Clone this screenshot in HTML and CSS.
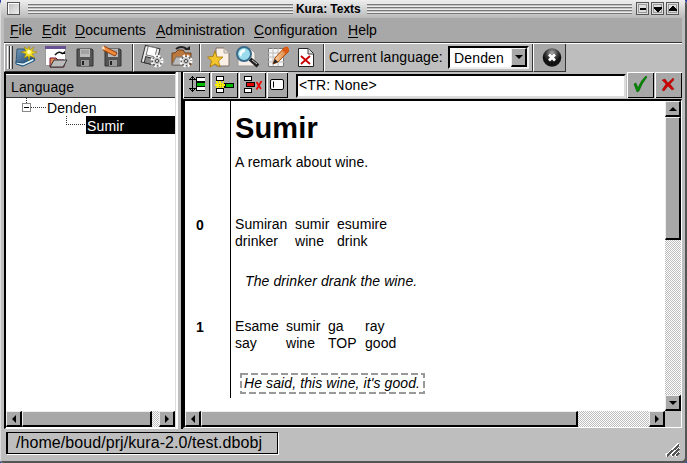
FILE: index.html
```
<!DOCTYPE html>
<html lang="en"><head><meta charset="utf-8"><title>Kura: Texts</title><link rel="stylesheet" href="styles.css"></head>
<body><div class="window">
<header class="title"><i class="close"></i><i class="stripes s1"></i><h1>Kura: Texts</h1><i class="stripes s2"></i>
<svg class="controls" width="45" height="14" shape-rendering="crispEdges"><g fill="#ddd" stroke="#555"><path d="M.5 .5h12v12H.5zM15.500 .5h12v12h-12zM30.500 .5h12v12h-12z"/></g><g fill="none" stroke="#999"><path d="M2.500 2.500h8v8h-8zM17.500 2.500h8v8h-8zM32.500 2.500h8v8h-8z"/></g><path d="M4 6h6v2H4zM18 5h8v2h-1v1h-1v1h-1v1h-2V9h-1V8h-1V7h-1zM33 9V7h1V6h1V5h1V4h2v1h1v1h1v1h1v2z"/></svg></header>
<nav class="menu"><span class="m1"><u>F</u>ile</span><span class="m2"><u>E</u>dit</span><span class="m3"><u>D</u>ocuments</span><span class="m4"><u>A</u>dministration</span><span class="m5"><u>C</u>onfiguration</span><span class="m6"><u>H</u>elp</span></nav>
<div class="toolbar">
<section class="t1"><i class="grip"></i><i class="grip"></i>
<svg width="118" height="26"><defs><linearGradient id="bl" x2="1" y2="1"><stop stop-color="#7297b8"/><stop offset="1" stop-color="#123d65"/></linearGradient><linearGradient id="or" x2="1"><stop stop-color="#ffe0b4"/><stop offset="1" stop-color="#d46b20"/></linearGradient></defs>
<path d="M4 4l10 0 8 11-13 6-6-3z" fill="url(#bl)" stroke="#355875"/><path d="M3 17l7 1 11-5v3l-11 5-7-2z" fill="#dceaf2" stroke="#164f78"/><path d="M16 1l1 4 4-3-2 4 5 1-5 2 3 4-5-2-1 5-1-5-4 2 2-4-5-2 5-1-2-4 4 2z" fill="#f0dc24" stroke="#9a7b00" stroke-width=".5"/><circle cx="16" cy="7" r="2" fill="#fffbb0"/>
<path d="M32.500 2.500h20v18h-20z" fill="#fff" stroke="#999"/><path d="M32 1h21v3H32z" fill="#685092"/><path d="M42 10q4-5 8-1" fill="none" stroke="#111" stroke-width="1.500"/><path d="M48 9h4V6z"/><path d="M37 22v-9h6l2 2h6v7z" fill="#e88d55" stroke="#713"/><path d="M37 22l4-7h13l-4 7z" fill="#bbb" stroke="#333"/>
<g id="floppy" transform="translate(63 3)"><path d="M1 1h15l1 1v16H1z" fill="#555" stroke="#333"/><path d="M4 1h10v8H4z" fill="#bbb"/><path d="M5 3h8M5 5h8" stroke="#888"/><path d="M5 12h8v6H5z" fill="#999"/><path d="M6 13h2v4H6z" fill="#222"/></g><use href="#floppy" x="28"/><path d="M91 1l13 7-2 3-12-6z" fill="#f28b39" stroke="#953d0d"/><path d="M89 2l2-1 1 4-3-1z" fill="#ffe0b4"/></svg></section>
<section class="t2"><svg width="60" height="26"><g transform="translate(8 1) rotate(14 9 10)"><path d="M1 1h15v17H1z" fill="#eee" stroke="#333"/><path d="M4 1h9v9H4z" fill="#fff" stroke="#777"/><path d="M4 12h8v6H4z" fill="#888" stroke="#333"/></g><path d="M38 20V8h3l3-3h5l2 3h6v12z" fill="#bd783e" stroke="#6f401b"/><path d="M42 4q5-4 11 0" fill="none" stroke="#222" stroke-width="2"/><path d="M50 5h6V1z" fill="#222"/><path d="M38 20l4-8h16l-4 8z" fill="#bbb" stroke="#777"/><g id="gear" fill="none" stroke="#fff"><circle cx="23" cy="16" r="5" fill="#555" stroke-width="3" stroke-dasharray="2 2"/><circle cx="23" cy="16" r="3.500" fill="#aaa" stroke="#eee"/><circle cx="23" cy="16" r="1.500" fill="#fff" stroke="#444"/></g><use href="#gear" x="29"/></svg></section>
<section class="t3"><svg width="118" height="28"><path d="M17 4h8l5 5v13H17z" transform="translate(-2 0)" fill="#fbf0e6" stroke="#827268"/><path d="M23 4v5h5" fill="#e4d5c8" stroke="#aaa"/><path d="M14 7l2 6h6l-4.500 4 1.500 6-5-3-5 3 1.500-6-4-4 5.500-.5z" fill="#f2c52c" stroke="#a87500" stroke-width=".8"/><path d="M37 5h13l4 4v13H37z" fill="#f6eee7" stroke="#999"/><path d="M49 15l8 7" stroke="#222" stroke-width="4"/><path d="M51 16l5 4" stroke="#ccc"/><circle cx="43" cy="10" r="7" fill="#9bdcec" stroke="#3a6a8a" stroke-width="2"/><path d="M38 10q1-5 6-5v3q-3 0-4 5z" fill="#f3ffff"/><path d="M67.500 4.500h15v18h-15z" fill="#f5f5f5" stroke="#777"/><path d="M67 9h16M67 13h16M67 18h16M72 4v18M77 4v18" stroke="#bbb"/><path d="M84 3l4 4-11 11-5 2 2-6z" fill="url(#or)" stroke="#a94b0c"/><path d="M84 3q4-2 4 4l-3 3-4-4z" fill="#dc5a13"/><path d="M72 20l5-2-3-3z" fill="#222"/><path d="M97.500 4.500h10l5 5v13h-15z" fill="#fff" stroke="#222"/><path d="M107 4v6h5" fill="#ddd" stroke="#444"/><path d="M100 12l9 8M109 12l-9 8" stroke="#c00" stroke-width="1.800"/></svg></section>
<section class="t4"><span>Current language:</span><div class="combo"><b>Denden</b><i class="sb down"></i></div></section>
<section class="t5"><svg width="30" height="27"><defs><radialGradient id="ball" cy=".25"><stop stop-color="#aaa"/><stop offset=".7" stop-color="#333"/><stop offset="1" stop-color="#111"/></radialGradient></defs><circle cx="18" cy="13.500" r="9.300" fill="url(#ball)"/><path d="M15 10.500l6 6M21 10.500l-6 6" stroke="#fff" stroke-width="2.800"/></svg></section></div>
<main><aside><div class="inner"><div class="colhead">Language</div><div class="tree"><svg width="41" height="36" shape-rendering="crispEdges"><path d="M20.500 0v5M25 9.500h15" stroke="#333" stroke-dasharray="1 1"/><path d="M16.500 5.500h8v8h-8z" fill="#fff" stroke="#888"/><path d="M18 9.500h5" stroke="#000"/></svg><span class="root">Denden</span><div class="childrow"><svg width="20" height="18" shape-rendering="crispEdges"><path d="M.5 0v8.500H20" fill="none" stroke="#333" stroke-dasharray="1 1"/></svg><span>Sumir</span></div></div>
<div class="hscroll"><i class="sb left"></i><i class="thumb"></i><i class="track"></i><i class="sb right"></i></div></div></aside><i class="splitter"></i>
<section class="content"><div class="edit">
<svg class="btn" width="27" height="26" shape-rendering="crispEdges"><path d="M9 4h1v16H9zM8 5h3v1H8zM7 6h1v1H7zM11 6h1v1h-1zM7 17h1v1H7zM11 17h1v1h-1zM8 18h3v1H8zM6 7h7v1H6z M6 16h7v1H6zM13 5h9v1h-9zM13 9h9v2h-9zM13 14h9v1h-9zM13 18h9v1h-9zM13 5h1v14h-1z"/><path d="M14 6h8v3h-8zM14 15h8v3h-8z" fill="#fff"/><path d="M14 11h8v3h-8z" fill="#00bd00"/></svg>
<svg class="btn" width="27" height="26" shape-rendering="crispEdges"><path d="M5 4h8v5H5zM5 16h8v5H5zM13 11h10v5H13z"/><path d="M6 5h6v3H6zM6 17h6v3H6z" fill="#fff"/><path d="M15 12h7v3h-7z" fill="#00bd00"/><path d="M8 9h2v2h2V9h1v2h-1v1h2v2h-2v1h1v1h-2v-1h-1v1H8v-1H7v1H5v-1h1v-1H4v-2h2v-1H5V9h2v2h1z" fill="#fff200"/><path d="M8 12h1v1H8zM10 12h1v1h-1zM8 14h1v1H8zM10 14h1v1h-1z" fill="#a79c00"/></svg>
<svg class="btn" width="27" height="26"><g shape-rendering="crispEdges"><path d="M5 4h8v5H5zM5 16h8v5H5zM7 10h9v5H7z"/><path d="M6 5h6v3H6zM6 17h6v3H6z" fill="#fff"/><path d="M8 11h7v3H8z" fill="#e00000"/></g><path d="M17.500 10l4.500 7M22.500 9l-5 8.500" stroke="#f00000" stroke-width="1.600"/></svg>
<svg class="btn b4" width="21" height="26"><rect x="3.500" y="7.500" width="13" height="10" rx="1.500" fill="#fff" stroke="#000"/><path d="M6.500 9.500v6" stroke="#000"/></svg>
<div class="field">&lt;TR: None&gt;</div>
<svg class="btn b5" width="27" height="26"><path d="M7 12l2-1 2 5q3-8 8-12l1 1q-5 6-8 14l-2 1z" fill="#008a00" stroke="#005700" stroke-width=".5"/></svg>
<svg class="btn b6" width="27" height="26"><path d="M7 8l3-1 3 4 5-5 1 2-4 4 4 5-2 1-4-4-4 5-2-1 4-6z" fill="#d00000" stroke="#870000" stroke-width=".4"/></svg></div>
<div class="document"><div class="page"><div class="numbers"><b class="n0">0</b><b class="n1">1</b></div><article><h2>Sumir</h2><p class="remark">A remark about wine.</p>
<div class="gloss g1"><span>Sumiran</span><span>sumir</span><span>esumire</span><span>drinker</span><span>wine</span><span>drink</span></div><p class="trans">The drinker drank the wine.</p><div class="gloss g2"><span>Esame</span><span>sumir</span><span>ga</span><span>ray</span><span>say</span><span>wine</span><span>TOP</span><span>good</span></div><p class="trans selected">He said, this wine, it's good.<svg width="186" height="22" shape-rendering="crispEdges"><rect x="1" y="1" width="183" height="19" fill="none" stroke="#999" stroke-width="2" stroke-dasharray="7 3"/></svg></p></article></div>
<div class="vscroll"><i class="sb up"></i><i class="thumb"></i><i class="track"></i><i class="sb down"></i></div><div class="hscroll"><i class="sb left"></i><i class="thumb"></i><i class="track"></i><i class="sb right"></i></div><i class="corner"></i></div></section></main>
<footer><span>/home/boud/prj/kura-2.0/test.dbobj</span><svg width="18" height="18" shape-rendering="crispEdges"><path d="M2 14L15 2M7 14l8-8M11 14l4-4" stroke="#fff" stroke-width="3"/><path d="M3 14L15 3M8 14l7-7M12 14l3-3" stroke="#555" stroke-width="2"/></svg></footer></div></body></html>
```

FILE: styles.css
```
*{box-sizing:border-box}
body{margin:0;background:#243baa;font:14px/17px "Liberation Sans",sans-serif;color:#000;overflow:hidden}
i,b{font-style:normal;display:block}
svg{display:block;flex:none}
.window{width:687px;height:463px;display:flex;flex-direction:column;padding:0 5px 0 4px;background:#bebebe;border-radius:5px 5px 4px 4px;box-shadow:inset 1px 1px #ddd,inset -2px -2px #555}
.title{height:18px;margin:0 -3px;flex:none;display:flex;align-items:flex-start;padding:2px 0 0 6px;background:linear-gradient(#eee,#bababa)}
.close{width:13px;height:13px;border:1px solid #555;background:linear-gradient(135deg,#bbb,#eee);box-shadow:inset 1px 1px #fff}
.stripes{height:12px;margin-top:1px;background:repeating-linear-gradient(#eee 0 1px,#777 1px 2px,#c5c5c5 2px 3px)}
.s1{width:265px;margin-left:8px}.s2{width:265px;margin-left:4px}
.title h1{width:67px;margin:-1px 0 0 3px;font-size:12px;line-height:16px;letter-spacing:-.05px;white-space:nowrap}
.controls{margin-left:4px}
.menu{height:25px;flex:none;background:#a8a8a8;border-bottom:1px solid #333;display:flex;padding:4px 0 0 6px}
.menu span{white-space:nowrap}.m1{width:32px}.m2{width:33px}.m3{width:81px}.m4{width:98px}.m5{width:94px}
u{text-underline-offset:2px;text-decoration-thickness:1px}
.toolbar{height:29px;flex:none;display:flex;border-top:1px solid #fff}
.toolbar section{background:#a8a8a8;border-right:1px solid #333;border-bottom:1px solid #333;border-left:1px solid #fff;display:flex;align-items:center}
.t1{width:129px;padding-left:2px}.grip{width:3px;height:23px;border-left:1px solid #fff;border-right:1px solid #333;background:#bbb}
.t2{width:67px}.t3{width:124px}.toolbar .t4{width:209px;background:#bebebe;padding-left:4px}.t4 span{width:119px;white-space:nowrap;letter-spacing:.1px}
.t5{width:33px}
.combo{height:23px;width:81px;background:#fff;border:2px solid #000;border-right-color:#eee;border-bottom-color:#eee;display:flex;justify-content:space-between;padding-left:4px}.combo b{font-weight:400;line-height:20px;letter-spacing:.15px}
.sb{width:16px;height:16px;background:#a8a8a8;border:1px solid #eee;border-right:2px solid #000;border-bottom:2px solid #000;flex:none;display:grid;place-items:center}
.sb:after{content:"";border:4px solid transparent;border-width:4px 4px 0;border-top-color:#000}
.sb.up:after{border-width:0 4px 4px;border-bottom-color:#000}.sb.left:after{border-width:4px 4px 4px 0;border-right-color:#000;border-top-color:transparent}.sb.right:after{border-width:4px 0 4px 4px;border-left-color:#000;border-top-color:transparent}
.combo .sb{height:19px}
main{height:357px;flex:none;display:flex}
aside{width:172px;border:2px solid #000;border-width:2px 0 0 2px;border-right:1px solid #ddd;border-bottom:1px solid #fff;background:#fff}
.inner{height:353px;display:flex;flex-direction:column}
.colhead{height:24px;background:#a8a8a8;border-top:1px solid #fff;border-bottom:1px solid #333;padding:4px 5px;letter-spacing:.1px}
.tree{flex:1;display:grid;grid-template-columns:41px 1fr;grid-template-rows:18px 18px}
.root{letter-spacing:.1px;line-height:21px}.childrow{grid-column:2;display:flex;margin-left:19px}.childrow span{background:#000;color:#fff;flex:1;line-height:20px;padding-left:1px;letter-spacing:.15px}
.hscroll{display:flex;height:16px}.thumb{background:#a8a8a8;border:1px solid #eee;border-right:2px solid #000;border-bottom:2px solid #000;width:130px}.track{flex:1;background:repeating-conic-gradient(#bdbdbd 0 25%,#fff 0 50%) 0 0/2px 2px}
.splitter{width:7px;background:#bebebe;border-left:2px solid #fff;border-right:2px solid #000}
.content{width:499px}.edit{height:27px;display:flex;align-items:flex-start}
.btn{background:#a8a8a8;border:0;box-shadow:inset 1px 1px #fff,inset -1px -1px #000;margin-right:1px}.b4{margin-right:8px}.b6{margin-right:0}
.field{width:330px;height:24px;margin-top:2px;border:2px solid #000;border-right-color:#ddd;border-bottom-color:#ddd;background:#fff;padding:1px;letter-spacing:.15px;margin-right:1px}
.document{height:329px;border:2px solid #000;border-right:1px solid #fff;border-bottom:1px solid #fff;display:grid;grid-template:310px 16px/480px 16px;background:#fff}
.page{display:flex;height:297px}.numbers{width:46px;border-right:1px solid #000;padding:116px 0 0 11px}.numbers b{height:17px}.n1{margin-top:85px}
article{padding:10px 0 0 4px}h2{margin:0;font-size:29px;line-height:34px;letter-spacing:.15px;height:43px}.remark{margin:0;height:62px;letter-spacing:.09px}
.gloss{display:grid;height:34px;letter-spacing:.04px}.g1{grid-template-columns:60px 42px 80px}.g2{grid-template-columns:51px 42px 37px 60px}
.trans{position:relative;font-style:italic;white-space:nowrap;letter-spacing:.1px;margin:23px 0 28px 10px;height:17px}.selected{margin-left:9px}.selected svg{position:absolute;left:-4px;top:-2px}
.vscroll{display:flex;flex-direction:column}.vscroll .thumb{width:16px;height:123px}.document .hscroll .thumb{width:377px}.corner{background:#bebebe}
footer{height:35px;display:flex;justify-content:space-between;padding:3px 0 0 2px}
footer span{width:272px;height:22px;border:1px solid #000;border-width:1px 1px 1px 2px;box-shadow:1px 1px #fff;padding-left:8px;font-size:16px;line-height:20px;letter-spacing:.07px}footer svg{margin-top:10px}
```
